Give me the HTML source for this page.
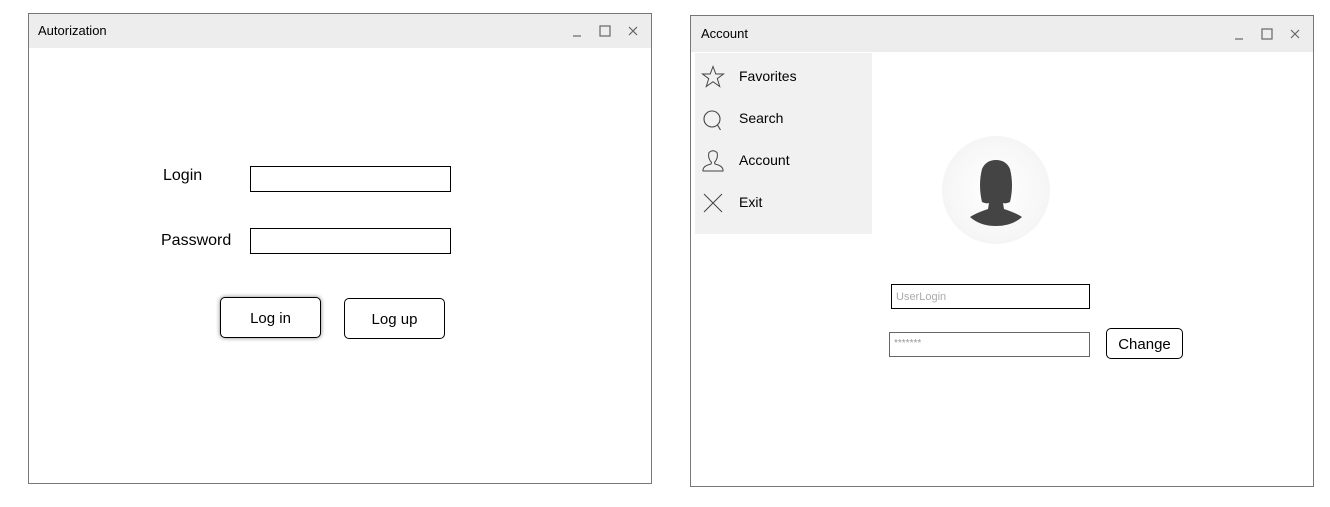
<!DOCTYPE html><html><head><style>
body{margin:0;width:1330px;height:507px;background:#fff;position:relative;font-family:"Liberation Sans",sans-serif;color:#000;overflow:hidden}
.a{position:absolute}
.win{position:absolute;border:1px solid #777;background:#fff;box-sizing:border-box}
.tb{position:absolute;left:0;right:0;top:0;background:#ededed;font-size:13px}
.inp{position:absolute;border:1px solid #000;box-sizing:border-box;background:#fff}
.btn{position:absolute;border:1px solid #000;border-radius:5px;box-sizing:border-box;background:#fff;text-align:center;font-size:15px}
.mi{position:absolute;left:44px;font-size:14px}
</style></head><body>
<div class="win" style="left:28px;top:13px;width:624px;height:471px">
 <div class="tb" style="height:34px"><span class="a" style="left:9px;top:9px">Autorization</span>
 <svg class="a" style="left:540px;top:9px" width="75" height="16" viewBox="0 0 75 16" fill="none" stroke="#666" stroke-width="1.2"><path d="M4 13H12"/><rect x="31" y="3" width="10" height="10"/><path d="M60 4L68 12M68 4L60 12"/></svg></div>
</div>
<div class="a" style="left:163px;top:167px;font-size:16px">Login</div>
<div class="a" style="left:161px;top:232px;font-size:16px">Password</div>
<div class="inp" style="left:250px;top:166px;width:201px;height:26px"></div>
<div class="inp" style="left:250px;top:228px;width:201px;height:26px"></div>
<div class="btn" style="left:220px;top:297px;width:101px;height:41px;line-height:41px;box-shadow:0 0 4px rgba(0,0,0,.5)">Log in</div>
<div class="btn" style="left:344px;top:298px;width:101px;height:41px;line-height:42px">Log up</div>

<div class="win" style="left:690px;top:15px;width:624px;height:472px">
 <div class="tb" style="height:36px"><span class="a" style="left:10px;top:10px">Account</span>
 <svg class="a" style="left:540px;top:10px" width="75" height="16" viewBox="0 0 75 16" fill="none" stroke="#666" stroke-width="1.2"><path d="M4 13H12"/><rect x="31" y="3" width="10" height="10"/><path d="M60 4L68 12M68 4L60 12"/></svg></div>
 <div class="a" style="left:4px;top:37px;width:177px;height:181px;background:#f1f1f1">
  <svg class="a" style="left:6px;top:12px" width="24" height="24" viewBox="0 0 24 24" fill="none" stroke="#444" stroke-width="1"><path d="M12 1.5L14.8 9H22.5L16.3 13.6L18.7 21.5L12 16.7L5.3 21.5L7.7 13.6L1.5 9H9.2Z"/></svg>
  <div class="mi" style="top:15px">Favorites</div>
  <svg class="a" style="left:6px;top:55px" width="24" height="24" viewBox="0 0 24 24" fill="none" stroke="#444" stroke-width="1.1"><circle cx="11" cy="11" r="8"/><path d="M16.5 17L19.5 22"/></svg>
  <div class="mi" style="top:57px">Search</div>
  <svg class="a" style="left:6px;top:96px" width="24" height="24" viewBox="0 0 24 24" fill="none" stroke="#444" stroke-width="1"><path d="M8 3.5Q12 0 16 3.5Q17.5 9 13.5 13.5L14 15Q21 16.5 22 20.5V22H2V20.5Q3 16.5 10 15L10.5 13.5Q6.5 9 8 3.5Z"/></svg>
  <div class="mi" style="top:99px">Account</div>
  <svg class="a" style="left:6px;top:138px" width="24" height="24" viewBox="0 0 24 24" fill="none" stroke="#444" stroke-width="1"><path d="M3 3L21 21M21 3L3 21"/></svg>
  <div class="mi" style="top:141px">Exit</div>
 </div>
</div>
<div class="a" style="left:942px;top:136px;width:108px;height:108px;border-radius:50%;background:radial-gradient(circle,#fff 0%,#f7f7f7 60%,#eee 100%)"></div>
<svg class="a" style="left:960px;top:155px" width="72" height="75" viewBox="0 0 72 75"><path fill="#444" d="M22 47Q18 30 22 14Q26 5 36 5Q46 5 50 14Q54 30 50 47Q46 49 43 48L44 54Q56 58 62 62Q52 71 36 71Q20 71 10 62Q16 58 28 54L29 48Q26 49 22 47Z"/></svg>
<div class="inp" style="left:891px;top:284px;width:199px;height:25px;font-size:11px;color:#aaa;padding:6px 0 0 4px">UserLogin</div>
<div class="inp" style="left:889px;top:332px;width:201px;height:25px;font-size:10px;color:#999;padding:5px 0 0 4px;border-color:#666">*******</div>
<div class="btn" style="left:1106px;top:328px;width:77px;height:31px;line-height:31px">Change</div>
</body></html>
